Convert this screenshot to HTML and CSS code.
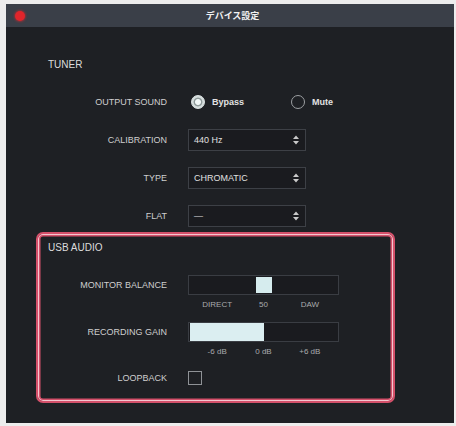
FILE: index.html
```html
<!DOCTYPE html>
<html lang="ja">
<head>
<meta charset="utf-8">
<title>デバイス設定</title>
<link rel="stylesheet" href="styles.css">
</head>
<body>
<div class="window">
  <div class="titlebar">
    <span class="close"></span>
    <span class="title">デバイス設定</span>
  </div>
  <div class="content">
    <section class="tuner">
      <h2 class="heading">TUNER</h2>
      <div class="rows">
        <div class="row">
          <div class="label">OUTPUT SOUND</div>
          <div class="radios">
            <label class="radio-opt first"><span class="radio on"></span><span class="radio-text">Bypass</span></label>
            <label class="radio-opt"><span class="radio"></span><span class="radio-text">Mute</span></label>
          </div>
        </div>
        <div class="row">
          <div class="label">CALIBRATION</div>
          <div class="select"><span>440 Hz</span><svg class="arrows" width="6" height="10" viewBox="0 0 6 10"><path d="M0 4L3 0.5L6 4Z M0 6L3 9.5L6 6Z" fill="#c9c9c9"/></svg></div>
        </div>
        <div class="row">
          <div class="label">TYPE</div>
          <div class="select"><span>CHROMATIC</span><svg class="arrows" width="6" height="10" viewBox="0 0 6 10"><path d="M0 4L3 0.5L6 4Z M0 6L3 9.5L6 6Z" fill="#c9c9c9"/></svg></div>
        </div>
        <div class="row">
          <div class="label">FLAT</div>
          <div class="select"><span>—</span><svg class="arrows" width="6" height="10" viewBox="0 0 6 10"><path d="M0 4L3 0.5L6 4Z M0 6L3 9.5L6 6Z" fill="#c9c9c9"/></svg></div>
        </div>
      </div>
    </section>
    <section class="usb">
      <h2 class="heading">USB AUDIO</h2>
      <div class="row slider-row first-slider">
        <div class="label">MONITOR BALANCE</div>
        <div class="slider balance"><span class="thumb"></span></div>
      </div>
      <div class="row tick-row">
        <div class="label"></div>
        <div class="ticks"><span>DIRECT</span><span>50</span><span>DAW</span></div>
      </div>
      <div class="row slider-row second-slider">
        <div class="label">RECORDING GAIN</div>
        <div class="slider gain"><span class="fill" style="width:50%"></span></div>
      </div>
      <div class="row tick-row">
        <div class="label"></div>
        <div class="ticks"><span>-6 dB</span><span>0 dB</span><span>+6 dB</span></div>
      </div>
      <div class="row loop-row">
        <div class="label">LOOPBACK</div>
        <span class="checkbox"></span>
      </div>
    </section>
  </div>
</div>
</body>
</html>
```

FILE: styles.css
```css
* { box-sizing: border-box; }
html, body { margin: 0; padding: 0; }
body {
  background: #ededed;
  width: 456px;
  height: 426px;
  padding: 4px 2px 3px 6px;
  font-family: "Liberation Sans", "Noto Sans CJK JP", sans-serif;
  overflow: hidden;
}
.window {
  width: 448px;
  height: 419px;
  background: #1e2024;
  display: flex;
  flex-direction: column;
}
.titlebar {
  height: 23px;
  background: #3a3f48;
  display: flex;
  align-items: center;
  padding-left: 9px;
}
.close {
  width: 10px;
  height: 10px;
  border-radius: 50%;
  background: #e0252b;
  box-shadow: 0 0 2px 1px rgba(224, 37, 43, 0.5);
  flex: none;
}
.title {
  flex: 1;
  text-align: center;
  color: #f2f2f2;
  font-size: 9px;
  font-weight: bold;
  font-family: "Noto Sans CJK JP", sans-serif;
  padding-right: 14px;
}
.content {
  padding-top: 32px;
}
.heading {
  margin: 0;
  font-size: 10px;
  line-height: 12px;
  font-weight: normal;
  color: #dcdcdc;
}
.tuner .heading { padding-left: 42px; }
.usb .heading { padding-left: 2px; }
.rows {
  display: flex;
  flex-direction: column;
  gap: 16px;
  margin-top: 20px;
}
.row {
  display: flex;
  align-items: center;
}
.label {
  font-size: 9px;
  color: #cfcfcf;
  text-align: right;
  flex: none;
}
.tuner .row { height: 22px; }
.tuner .label { width: 161px; margin-right: 21px; }
.radios { display: flex; align-items: center; padding-left: 3px; }
.radio-opt { display: flex; align-items: center; }
.radio-opt.first { width: 100px; }
.radio {
  width: 14px;
  height: 14px;
  border-radius: 50%;
  border: 1.5px solid #9c9fa2;
  flex: none;
}
.radio.on {
  border: 1.5px solid #dfe6e6;
  background: radial-gradient(circle, #f2f8f8 0 2.5px, #8f9a9a 3.5px 4px, #d4dcdc 4.8px);
}
.radio-text {
  font-size: 9px;
  color: #e2e2e2;
  font-weight: bold;
  margin-left: 7px;
}
.select {
  width: 118px;
  height: 22px;
  border: 1px solid #3d4046;
  background: #1a1b1f;
  display: flex;
  align-items: center;
  justify-content: space-between;
  padding: 0 6px 0 5px;
  font-size: 9px;
  color: #e0e0e0;
}
.usb {
  margin: 5px 0 0 30px;
  width: 359px;
  border: 2px solid #d4506a;
  border-radius: 7px;
  box-shadow: inset 0 0 0 1px #f4c6cf, inset 0 0 0 2.5px #d4506a;
  padding: 8px 0 16px 8px;
}
.usb .label { width: 121px; margin-right: 21px; }
.slider-row.first-slider { margin-top: 21px; }
.slider {
  width: 151px;
  height: 20px;
  border: 1px solid #3a3d43;
  background: #1a1b1f;
  display: flex;
  align-items: center;
  padding: 0 1px;
}
.balance { padding-left: 67px; }
.thumb {
  width: 16px;
  height: 16px;
  background: #d6ecee;
}
.fill {
  height: 18px;
  background: #dbeef1;
}
.tick-row { margin-top: 5px; }
.ticks {
  width: 151px;
  height: 10px;
  display: grid;
  grid-template-columns: 1fr 1fr 1fr;
  padding: 0 6px;
  font-size: 8px;
  line-height: 10px;
  color: #a9abad;
  text-align: center;
}
.second-slider { margin-top: 12px; }
.loop-row { margin-top: 14px; }
.checkbox {
  width: 14px;
  height: 14px;
  border: 1px solid #8f9296;
}
```
